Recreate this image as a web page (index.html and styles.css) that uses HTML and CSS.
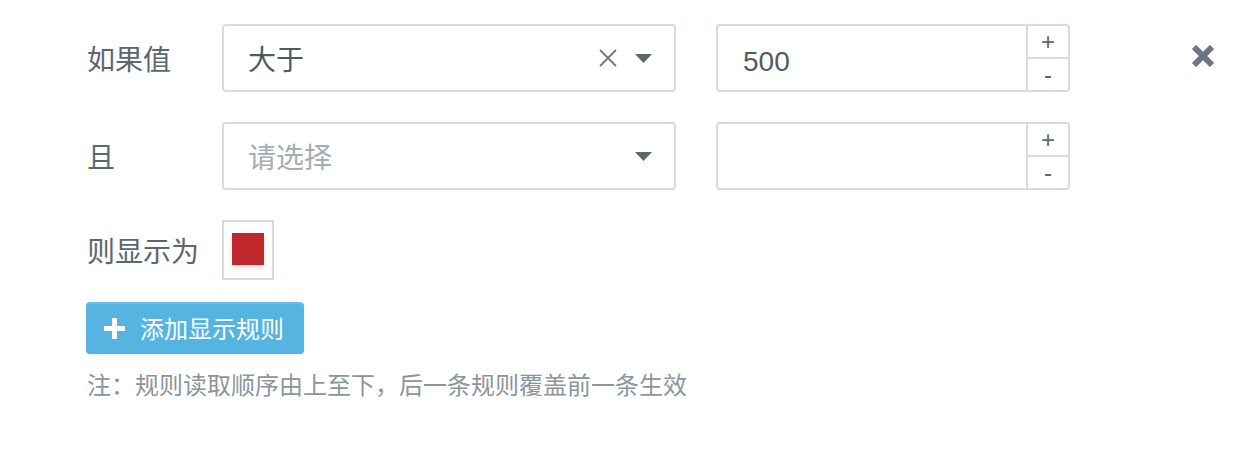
FILE: index.html
```html
<!DOCTYPE html>
<html lang="zh-CN">
<head>
    <meta charset="UTF-8">
    <meta name="viewport" content="width=device-width, initial-scale=1.0">
    <title>显示规则</title>
    <link rel="stylesheet" href="styles.css">
</head>
<body>
    <div class="rule-panel">
      <div class="rule-row">
        <label class="row-label">如果值</label>
        <div class="select">
          <span class="select-value">大于</span>
          <svg class="select-clear" width="18" height="18" viewBox="0 0 18 18"><path d="M1 1 L17 17 M17 1 L1 17" stroke="#6f7a82" stroke-width="1.8" fill="none"/></svg>
          <svg class="select-caret" width="17" height="9" viewBox="0 0 17 9"><path d="M0 0 H17 L8.5 9 Z" fill="#5d6770"/></svg>
        </div>
        <div class="number-input">
          <span class="number-value">500</span>
          <div class="spinner">
            <span class="spin-btn">+</span>
            <span class="spin-btn">-</span>
          </div>
        </div>
        <svg class="remove-rule" width="24" height="22" viewBox="0 0 24 22"><path d="M3 2 L21 20 M21 2 L3 20" stroke="#6b7680" stroke-width="6" fill="none"/></svg>
      </div>

      <div class="rule-row">
        <label class="row-label">且</label>
        <div class="select">
          <span class="select-value placeholder">请选择</span>
          <svg class="select-caret" width="17" height="9" viewBox="0 0 17 9"><path d="M0 0 H17 L8.5 9 Z" fill="#5d6770"/></svg>
        </div>
        <div class="number-input">
          <span class="number-value"></span>
          <div class="spinner">
            <span class="spin-btn">+</span>
            <span class="spin-btn">-</span>
          </div>
        </div>
      </div>

      <div class="rule-row">
        <label class="row-label">则显示为</label>
        <div class="swatch">
          <span class="swatch-color"></span>
        </div>
      </div>

      <button class="add-btn">
        <svg width="21" height="21" viewBox="0 0 21 21"><path d="M10.5 0 V21 M0 10.5 H21" stroke="#fff" stroke-width="5" fill="none"/></svg>
        <span>添加显示规则</span>
      </button>

      <p class="note">注：规则读取顺序由上至下，后一条规则覆盖前一条生效</p>
    </div>
</body>
</html>
```

FILE: styles.css
```css
html, body {
    margin: 0;
    background: #fff;
}
body {
    font-family: "Liberation Sans", "Noto Sans CJK SC", sans-serif;
    color: #5b6670;
}
.rule-panel {
    padding: 24px 0 0 87px;
    display: flex;
    flex-direction: column;
    align-items: flex-start;
}
.rule-row {
    display: flex;
    align-items: center;
    margin-bottom: 30px;
}
.row-label {
    width: 135px;
    font-size: 28px;
    color: #5b6670;
}
.select {
    box-sizing: border-box;
    width: 454px;
    height: 68px;
    border: 2px solid #d3dde0;
    border-radius: 4px;
    padding: 0 22px 0 24px;
    display: flex;
    align-items: center;
}
.select-value {
    flex: 1;
    font-size: 28px;
    color: #4f5b63;
}
.select-value.placeholder {
    color: #a3adb3;
}
.select-clear {
    margin-right: 18px;
}
.number-input {
    box-sizing: border-box;
    width: 354px;
    height: 68px;
    margin-left: 40px;
    border: 2px solid #d3dde0;
    border-radius: 4px;
    display: flex;
}
.number-value {
    flex: 1;
    padding: 3px 0 0 25px;
    font-size: 28px;
    line-height: 66px;
    color: #4f5b63;
    font-family: "Liberation Sans", sans-serif;
}
.spinner {
    width: 40px;
    border-left: 2px solid #d3dde0;
    display: flex;
    flex-direction: column;
}
.spin-btn {
    flex: 1;
    display: flex;
    align-items: center;
    justify-content: center;
    font-size: 24px;
    color: #5b6670;
}
.spin-btn:first-child {
    flex: 0 0 31px;
}
.spin-btn + .spin-btn {
    border-top: 2px solid #d3dde0;
}
.remove-rule {
    margin-left: 121px;
    margin-top: -4px;
}
.swatch {
    box-sizing: border-box;
    width: 52px;
    height: 60px;
    border: 2px solid #d3dde0;
    padding: 11px 8px 13px;
}
.swatch-color {
    display: block;
    width: 32px;
    height: 32px;
    background: #c0272d;
    box-shadow: 0 3px 6px rgba(0, 0, 0, 0.12);
}
.add-btn {
    margin: -8px 0 0 -1px;
    width: 218px;
    height: 52px;
    border: none;
    border-top: 2px solid #6cc0e8;
    border-radius: 4px;
    background: #55b4e0;
    color: #fff;
    font-family: "Noto Sans CJK SC", sans-serif;
    font-size: 24px;
    display: flex;
    align-items: center;
    padding: 0 0 4px 18px;
    gap: 15px;
    box-shadow: 0 1px 2px rgba(0, 0, 0, 0.08);
}
.add-btn svg {
    margin-top: 2px;
}
.note {
    margin: 12px 0 0;
    font-size: 24px;
    color: #8b959c;
    font-family: "Noto Sans CJK SC", sans-serif;
}
```
